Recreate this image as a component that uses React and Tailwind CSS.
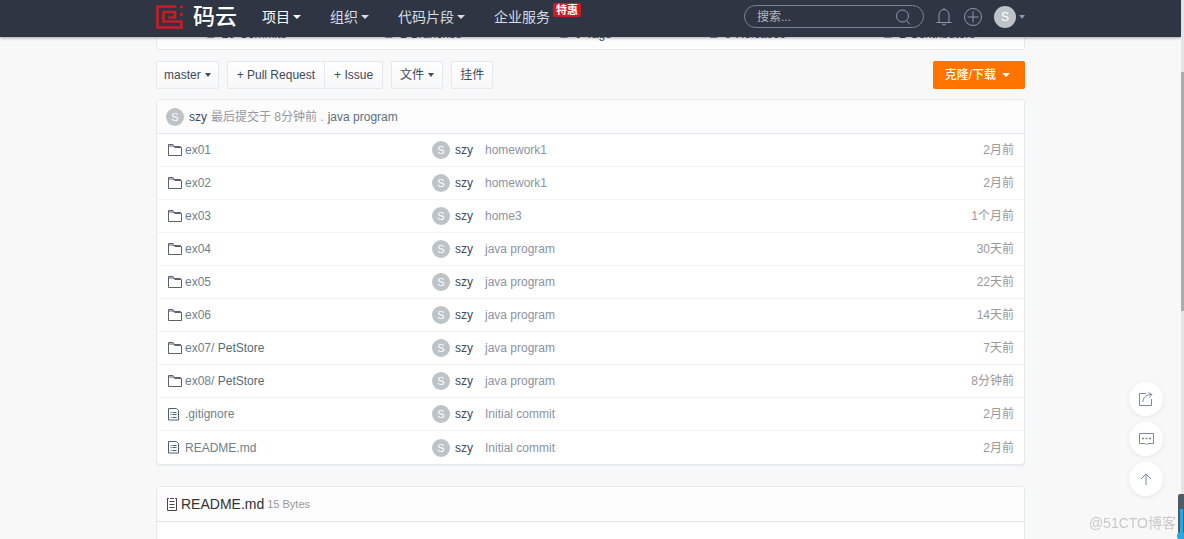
import clsx from 'clsx';

const files = [
  { name: 'ex01', message: 'homework1', time: '2月前' },
  { name: 'ex02', message: 'homework1', time: '2月前' },
  { name: 'ex03', message: 'home3', time: '1个月前' },
  { name: 'ex04', message: 'java program', time: '30天前' },
  { name: 'ex05', message: 'java program', time: '22天前' },
  { name: 'ex06', message: 'java program', time: '14天前' },
  { name: 'ex07/', child: 'PetStore', message: 'java program', time: '7天前' },
  { name: 'ex08/', child: 'PetStore', message: 'java program', time: '8分钟前' },
  { name: '.gitignore', isFile: true, message: 'Initial commit', time: '2月前' },
  { name: 'README.md', isFile: true, message: 'Initial commit', time: '2月前' },
];

const stats = [
  { count: 10, label: 'Commits' },
  { count: 1, label: 'Branches' },
  { count: 0, label: 'Tags' },
  { count: 0, label: 'Releases' },
  { count: 1, label: 'Contributors' },
];

function Caret({ size = 'h-1 w-2' }) {
  return (
    <svg viewBox="0 0 8 4" preserveAspectRatio="none" className={clsx('shrink-0', size)} fill="currentColor" aria-hidden="true">
      <path d="M0 0h8L4 4z" />
    </svg>
  );
}

function Avatar() {
  return (
    <span className="flex h-[18px] w-[18px] shrink-0 items-center justify-center rounded-full bg-[#bdc3c7] pt-px text-[11px] text-white">
      S
    </span>
  );
}

function FolderIcon() {
  return (
    <svg viewBox="0 0 14 13" className="h-[13px] w-[14px] shrink-0" fill="none" stroke="#5c6070" aria-hidden="true">
      <path d="M.5 11.500V.5h4.500l1.500 2h6v1.500" />
      <path d="M.5 11.500h13v-8h-6.500l-2-1.500H.5" />
    </svg>
  );
}

function FileIcon() {
  return (
    <svg viewBox="0 0 12 13" className="h-[13px] w-3 shrink-0" fill="none" stroke="#4f6075" aria-hidden="true">
      <path d="M.5.5h8l2 2v9.500H.5z" />
      <path d="M2.500 4.500h1M4.500 4.500h4M2.500 6.500h1M4.500 6.500h4M2.500 9.500h1M4.500 9.500h4" />
    </svg>
  );
}

function Header() {
  return (
    <header className="relative z-10 h-[37px] bg-[#2f3543] shadow-[0_1px_3px_rgba(0,0,0,0.35)]">
      <div className="mx-auto flex h-[33px] w-[869px] max-w-full items-center">
        <a href="#" className="flex items-center gap-2.5 text-[22px] leading-6 font-medium text-white">
          <svg viewBox="0 0 27 24" className="h-6 w-[27px]" fill="none" stroke="#c71d23" strokeWidth="2.6" aria-hidden="true">
            <path d="M20 1.500H1.500v21h24V16.500H7.500V7h11.500v5.500h-6.500" />
            <path d="M24 2h3M24 9.500h3" />
          </svg>
          码云
        </a>
        <nav className="ml-[25px] flex items-center gap-[29px] text-sm text-[#d9dce2]">
          <a href="#" className="flex items-center gap-[3px] text-white">项目<Caret /></a>
          <a href="#" className="flex items-center gap-[3px]">组织<Caret /></a>
          <a href="#" className="flex items-center gap-[3px]">代码片段<Caret /></a>
          <a href="#" className="relative">
            企业服务
            <span className="absolute -top-1 left-[59px] rounded-xs bg-[#c71d23] px-[3px] text-[11px] leading-[14px] font-bold whitespace-nowrap text-white">特惠</span>
          </a>
        </nav>
        <div className="ml-auto flex items-center gap-3 text-[#8e97ab]">
          <label className="flex h-[23px] w-[180px] items-center rounded-full border border-[#7d8498] px-3">
            <input type="text" aria-label="搜索" placeholder="搜索..." className="min-w-0 flex-1 bg-transparent text-xs text-white outline-none placeholder:text-[#b4b8c1]" />
            <svg viewBox="0 0 16 16" className="h-4 w-4" fill="none" stroke="currentColor" aria-hidden="true">
              <circle cx="7.500" cy="7" r="6" />
              <path d="M11.500 11.500l3.500 4" />
            </svg>
          </label>
          <button type="button" aria-label="通知">
            <svg viewBox="0 0 16 19" className="h-[19px] w-4" fill="none" stroke="currentColor" aria-hidden="true">
              <path d="M3 15V8a5 5.500 0 0 1 10 0v7M.5 15.500h15M8 .5v2M6 17q2 2 4 0" />
            </svg>
          </button>
          <button type="button" aria-label="新建">
            <svg viewBox="0 0 18 18" className="h-[18px] w-[18px]" fill="none" stroke="currentColor" aria-hidden="true">
              <circle cx="9" cy="9" r="8.500" />
              <path d="M9 3.500v11M3.500 9h11" />
            </svg>
          </button>
          <button type="button" className="flex items-center gap-[3px]">
            <span className="flex h-[22px] w-[22px] items-center justify-center rounded-full bg-[#bdc3c7] text-xs text-white">S</span>
            <Caret size="h-1 w-1.5" />
          </button>
        </div>
      </div>
    </header>
  );
}

function Stats() {
  return (
    <ul className="flex h-8 items-center justify-around rounded-xs border border-[#e3e9ed] bg-[#fdfdfd] text-xs text-[#40485b]">
      {stats.map((stat) => (
        <li key={stat.label} className="flex items-center gap-1">
          <svg viewBox="0 0 12 10" className="h-2.5 w-3" fill="none" stroke="#8c92a4" aria-hidden="true">
            <path d="M1.500 2v6.500h7M4 6.500h6" />
          </svg>
          <b>{stat.count}</b> {stat.label}
        </li>
      ))}
    </ul>
  );
}

const toolButton = 'flex h-7 items-center gap-1 border border-[#e3e9ed] bg-linear-to-b from-white to-[#f7f7f7] text-xs text-[#40485b]';

function Toolbar() {
  return (
    <div className="mt-[11px] flex items-center gap-2">
      <button type="button" className={clsx(toolButton, 'rounded-xs px-[7px]')}>master <Caret size="h-1 w-1.5" /></button>
      <div className="flex">
        <button type="button" className={clsx(toolButton, 'rounded-l-xs px-[9px]')}>+ Pull Request</button>
        <button type="button" className={clsx(toolButton, '-ml-px rounded-r-xs px-[9px]')}>+ Issue</button>
      </div>
      <button type="button" className={clsx(toolButton, 'rounded-xs px-2')}>文件 <Caret size="h-1 w-1.5" /></button>
      <button type="button" className={clsx(toolButton, 'rounded-xs px-2')}>挂件</button>
      <button type="button" className="ml-auto flex h-7 items-center gap-1.5 rounded-xs bg-[#ff7300] pr-[15px] pl-3 text-xs font-medium text-white">
        克隆/下载 <Caret />
      </button>
    </div>
  );
}

function FileTable() {
  return (
    <section className="mt-2.5 overflow-hidden rounded-sm border border-[#e3e9ed] bg-white text-xs shadow-[0_1px_1px_rgba(0,0,0,0.06)]">
      <div className="flex h-[34px] items-center gap-1 border-b border-[#dfe6ea] bg-[#fcfcfc] px-[9px] text-[#9497a5]">
        <Avatar />
        <a href="#" className="ml-px text-[#40485b]">szy</a>
        <span>最后提交于 8分钟前 .</span>
        <a href="#" className="text-[#5d7080]">java program</a>
      </div>
      <table className="w-full table-fixed border-separate border-spacing-0">
        <tbody>
          {files.map((file) => (
            <tr key={file.name} className="h-[33px] *:border-b *:border-[#f2f4f6] last:*:border-b-0">
              <td className="w-[275px] pl-[11px]">
                <a href="#" className="flex items-center gap-[3px] text-[#6d7f8c]">
                  {file.isFile ? <FileIcon /> : <FolderIcon />}
                  <span className={clsx(file.isFile && 'ml-0.5')}>
                    {file.name} {file.child && <span className="text-[#526b78]">{file.child}</span>}
                  </span>
                </a>
              </td>
              <td className="w-[53px]">
                <a href="#" className="flex items-center gap-[5px] text-[#40485b]"><Avatar />szy</a>
              </td>
              <td><a href="#" className="text-[#8c92a4]">{file.message}</a></td>
              <td className="w-[120px] pr-2.5 text-right text-[#999]">{file.time}</td>
            </tr>
          ))}
        </tbody>
      </table>
    </section>
  );
}

function Readme() {
  return (
    <section className="mt-[21px] rounded-sm border border-[#e3e9ed] bg-white">
      <h2 className="flex h-[35px] items-center gap-[3px] border-b border-[#dfe6ea] bg-[#fcfcfc] px-[9px] text-sm text-[#333]">
        <svg viewBox="0 0 12 13" className="h-[13px] w-3" fill="none" stroke="#4e4450" aria-hidden="true">
          <path d="M1.500 1v11.500h9V1M1 .5h2M4 .5h4M9 .5h2M3.500 3.500h5M3.500 6.500h5M3.500 9.500h5" />
        </svg>
        README.md
        <small className="pt-px text-[11px] text-[#999]">15 Bytes</small>
      </h2>
      <div className="h-40" />
    </section>
  );
}

const floatButton = 'flex h-[34px] w-[34px] items-center justify-center rounded-full bg-white text-[#7d88a3] shadow-[0_1px_5px_rgba(0,0,0,0.08)]';

function FloatingActions() {
  return (
    <div className="fixed right-[21px] bottom-[43px] flex flex-col gap-1.5">
      <button type="button" aria-label="分享" className={floatButton}>
        <svg viewBox="0 0 14 14" className="h-3.5 w-3.5" fill="none" stroke="currentColor" aria-hidden="true">
          <path d="M7 1.500H.5v12h12V7M4 10c0-4 2-7 8-7.500M9.500.5l3.500 2-2.500 3" />
        </svg>
      </button>
      <button type="button" aria-label="评论" className={floatButton}>
        <svg viewBox="0 0 15 13" className="h-[13px] w-[15px]" fill="none" stroke="currentColor" aria-hidden="true">
          <path d="M.5.5h14v10H9l-1.500 1.500L6 10.500H.5z" />
          <path d="M3 5.500h2M6.500 5.500h2M10 5.500h2" strokeWidth="1.500" />
        </svg>
      </button>
      <button type="button" aria-label="回到顶部" className={floatButton}>
        <svg viewBox="0 0 12 12" className="h-3 w-3" fill="none" stroke="currentColor" aria-hidden="true">
          <path d="M6 12V1M1 6l5-5 5 5" />
        </svg>
      </button>
    </div>
  );
}

export default function App() {
  return (
    <div className="h-screen overflow-hidden bg-[#f8f8f8] pr-[3px] font-['Liberation_Sans','Noto_Sans_CJK_SC',sans-serif]">
      <Header />
      <main className="mx-auto -mt-[19px] w-[869px] max-w-full">
        <Stats />
        <Toolbar />
        <FileTable />
        <Readme />
      </main>
      <FloatingActions />
      {/* scrollbar */}
      <div className="fixed inset-y-0 right-0 z-20 w-[3px] bg-[#e4e4e4] pt-[72px]">
        <div className="h-[239px] bg-[#acacac]" />
      </div>
      {/* thermometer widget, cut off by the window edge */}
      <svg viewBox="0 0 8 46" className="fixed right-0 bottom-0 z-20 h-[46px] w-2" aria-hidden="true">
        <path d="M2 46V3a2 2 0 0 1 2-2h4v45z" fill="#4d5b68" />
        <path d="M4 16h3v24H4z" fill="#2aa7e0" />
        <circle cx="5" cy="43" r="4" fill="#2aa7e0" />
      </svg>
      <p className="fixed right-2 bottom-1.5 text-sm text-[#c8c8c8]">@51CTO博客</p>
    </div>
  );
}
